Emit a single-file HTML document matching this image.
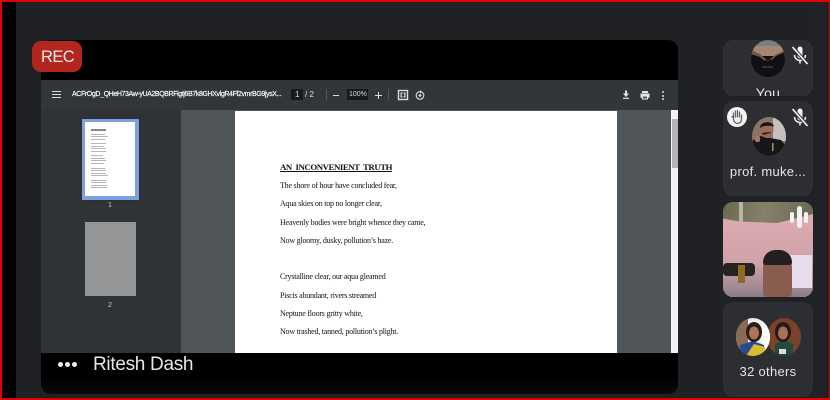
<!DOCTYPE html>
<html>
<head>
<meta charset="utf-8">
<style>
html,body{margin:0;padding:0;background:#202124}
#r{position:relative;width:830px;height:400px;overflow:hidden;background:#202124;font-family:"Liberation Sans",sans-serif;filter:blur(.35px)}
#r div,#r svg{position:absolute}
.t{white-space:nowrap}
.p{left:280px;font:8px/11px "Liberation Serif",serif;letter-spacing:-.22px;color:#111;white-space:nowrap}
.card{left:723px;width:90px;background:#2d2e31;border-radius:10px}
.l{background:#b5b5b5;height:1px}
</style>
</head>
<body>
<div id="r">
<div style="left:0;top:0;width:16px;height:400px;background:#000"></div>
<div style="left:16px;top:0;width:814px;height:400px;background:#202124"></div>
<div style="left:815px;top:0;width:13px;height:400px;background:#212225"></div>

<!-- stage -->
<div style="left:41px;top:40px;width:637px;height:354px;background:#000;border-radius:10px"></div>
<div style="left:41px;top:80px;width:637px;height:30px;background:#323639"></div>
<div style="left:41px;top:110px;width:140px;height:243px;background:#2f3335"></div>
<div style="left:181px;top:110px;width:490px;height:243px;background:#50555a"></div>
<div style="left:235px;top:111px;width:382px;height:242px;background:#fff"></div>
<div style="left:671px;top:110px;width:7px;height:243px;background:#f1f1f1"></div>
<div style="left:672px;top:119px;width:6px;height:49px;background:#b4b4b4"></div>
<div style="left:41px;top:353px;width:637px;height:41px;background:linear-gradient(#000 60%,#0a0a0a);border-radius:0 0 10px 10px"></div>

<!-- REC -->
<div style="left:32px;top:41px;width:50px;height:31px;background:#b3261e;border-radius:9px"></div>
<div class="t" style="left:41px;top:47px;font-size:16.500px;line-height:20px;letter-spacing:-.6px;color:#f5e8e6">REC</div>

<!-- toolbar -->
<div style="left:52px;top:91px;width:9px;height:1.4px;background:#ddd"></div>
<div style="left:52px;top:94px;width:9px;height:1.4px;background:#ddd"></div>
<div style="left:52px;top:97px;width:9px;height:1.4px;background:#ddd"></div>
<div class="t" style="left:72px;top:89px;font-size:7px;line-height:12px;color:#fff;letter-spacing:-.38px;-webkit-text-stroke:.15px #fff">ACFrOgD_QHeH73Aw-yUA2BQBRFigtj6B7k8GHXvlgR4Ff2vmrBG9jysX...</div>
<div style="left:291px;top:89px;width:12px;height:11px;background:#17191b"></div>
<div class="t" style="left:295px;top:89px;font-size:8px;line-height:11px;color:#ddd">1</div>
<div class="t" style="left:305px;top:89px;font-size:8px;line-height:11px;color:#ddd">/ 2</div>
<div style="left:326px;top:89px;width:1px;height:11px;background:#55585b"></div>
<div style="left:333px;top:95px;width:6px;height:1.3px;background:#ddd"></div>
<div style="left:347px;top:89px;width:21px;height:11px;background:#17191b"></div>
<div class="t" style="left:349px;top:89px;font-size:7px;line-height:11px;color:#ddd">100%</div>
<div style="left:375px;top:95px;width:7px;height:1.3px;background:#ddd"></div>
<div style="left:378px;top:92px;width:1.3px;height:7px;background:#ddd"></div>
<div style="left:388px;top:89px;width:1px;height:11px;background:#55585b"></div>
<svg style="left:397px;top:89px" width="12" height="12" viewBox="0 0 12 12"><rect x="1.500" y="1.500" width="9" height="9" fill="none" stroke="#ddd" stroke-width="1.400"/><path d="M3.500 3.500h2v1.300h-.8v2.400h.8v1.300h-2zM8.500 3.500h-2v1.300h.8v2.400h-.8v1.300h2z" fill="#ddd"/></svg>
<svg style="left:414px;top:89px" width="12" height="12" viewBox="0 0 12 12"><circle cx="6" cy="6.500" r="3.800" fill="none" stroke="#ddd" stroke-width="1.100"/><path d="M6 1l2.200 1.700L6 4.400z" fill="#ddd"/><rect x="4.800" y="5.300" width="2.400" height="2.400" transform="rotate(45 6 6.500)" fill="#ddd"/></svg>
<svg style="left:621px;top:89px" width="10" height="12" viewBox="0 0 10 12"><path d="M4 1.500h2v3h2L5 8 2 4.500h2z" fill="#e4e4e4"/><rect x="2" y="8.700" width="6" height="1.200" fill="#e4e4e4"/></svg>
<svg style="left:639px;top:89px" width="12" height="12" viewBox="0 0 12 12"><path d="M3 2h6v2H3zM1.500 4.500h9v4.200H9V10.500H3V8.700H1.500z" fill="#e4e4e4"/><rect x="4" y="7.500" width="4" height="2" fill="#555"/></svg>
<div style="left:662px;top:91px;width:2px;height:2px;background:#ddd;border-radius:50%"></div>
<div style="left:662px;top:94.500px;width:2px;height:2px;background:#ddd;border-radius:50%"></div>
<div style="left:662px;top:98px;width:2px;height:2px;background:#ddd;border-radius:50%"></div>

<!-- thumbnails -->
<div style="left:82px;top:119px;width:57px;height:81px;background:#7e9fe0;box-shadow:0 0 1px #222"></div>
<div style="left:85px;top:122px;width:50px;height:74px;background:#fff"></div>
<div class="l" style="left:91px;top:129px;width:15px;height:2px;background:#888"></div>
<div class="l" style="left:91px;top:134px;width:14px"></div>
<div class="l" style="left:91px;top:136px;width:17px"></div>
<div class="l" style="left:91px;top:139px;width:14px"></div>
<div class="l" style="left:91px;top:143px;width:15px"></div>
<div class="l" style="left:91px;top:146px;width:13px"></div>
<div class="l" style="left:91px;top:148px;width:15px"></div>
<div class="l" style="left:91px;top:151px;width:15px"></div>
<div class="l" style="left:91px;top:155px;width:12px"></div>
<div class="l" style="left:91px;top:158px;width:14px"></div>
<div class="l" style="left:91px;top:160px;width:15px"></div>
<div class="l" style="left:91px;top:163px;width:13px"></div>
<div class="l" style="left:91px;top:168px;width:14px"></div>
<div class="l" style="left:91px;top:170px;width:15px"></div>
<div class="l" style="left:91px;top:173px;width:15px"></div>
<div class="l" style="left:91px;top:175px;width:17px"></div>
<div class="l" style="left:91px;top:180px;width:15px"></div>
<div class="l" style="left:91px;top:182px;width:15px"></div>
<div class="l" style="left:91px;top:185px;width:16px"></div>
<div class="l" style="left:91px;top:187px;width:16px"></div>
<div class="t" style="left:108px;top:201px;font-size:7px;line-height:9px;color:#ccc">1</div>
<div style="left:85px;top:222px;width:51px;height:74px;background:#949697"></div>
<div class="t" style="left:108px;top:301px;font-size:7px;line-height:9px;color:#ccc">2</div>

<!-- document text -->
<div class="p" style="top:162px;font-size:8.800px;font-weight:bold;text-decoration:underline;letter-spacing:-.45px;word-spacing:2px;color:#111">AN INCONVENIENT TRUTH</div>
<div class="p" style="top:180px">The shore of hour have concluded fear,</div>
<div class="p" style="top:198px">Aqua skies on top no longer clear,</div>
<div class="p" style="top:217px">Heavenly bodies were bright whence they came,</div>
<div class="p" style="top:235px">Now gloomy, dusky, pollution’s haze.</div>
<div class="p" style="top:271px">Crystalline clear, our aqua gleamed</div>
<div class="p" style="top:290px">Piscis abundant, rivers streamed</div>
<div class="p" style="top:308px">Neptune floors gritty white,</div>
<div class="p" style="top:326px">Now trashed, tanned, pollution’s plight.</div>

<!-- presenter bar -->
<div style="left:58px;top:362px;width:5px;height:5px;border-radius:50%;background:#eee"></div>
<div style="left:65px;top:362px;width:5px;height:5px;border-radius:50%;background:#eee"></div>
<div style="left:72px;top:362px;width:5px;height:5px;border-radius:50%;background:#eee"></div>
<div class="t" style="left:93px;top:352px;font-size:19px;line-height:26px;letter-spacing:-.3px;color:#e8e8e8">Ritesh Dash</div>

<!-- right column -->
<div class="card" style="top:40px;height:56px"></div>
<svg style="left:751px;top:40px" width="34" height="37" viewBox="0 0 34 37"><defs><clipPath id="a"><ellipse cx="17" cy="18.500" rx="17" ry="18.500"/></clipPath></defs><g clip-path="url(#a)"><rect width="34" height="37" fill="#111114"/><rect width="34" height="9" fill="#7b7f7c"/><rect y="6" width="34" height="10" fill="#a98670"/><path d="M0 10l9 4 8 7 7-6 10-5v8l-34 4z" fill="#6c5a50"/><path d="M0 14l9 3 8 7 8-8 9-4v25H0z" fill="#101013"/><rect x="11" y="26" width="11" height="2" fill="#333"/></g></svg>
<svg style="left:790px;top:45px" width="20" height="22" viewBox="0 0 20 22"><path d="M7.500 4a2.500 2.500 0 0 1 5 0v7a2.500 2.500 0 0 1-5 0z" fill="#f2f2f2"/><path d="M4.500 10a5.500 5.500 0 0 0 11 0M10 15.500v3" fill="none" stroke="#f2f2f2" stroke-width="1.500"/><path d="M2.500 2l15 17" stroke="#2d2e31" stroke-width="3.500"/><path d="M2.500 2l15 17" stroke="#f2f2f2" stroke-width="1.700"/></svg>
<div class="t" style="left:723px;top:84px;width:90px;height:12px;overflow:hidden;text-align:center;font-size:14px;line-height:18px;color:#e6e6e6;letter-spacing:.3px">You</div>

<div class="card" style="top:101px;height:95px"></div>
<div style="left:727px;top:107px;width:20px;height:20px;border-radius:50%;background:#f4f4f4"></div>
<svg style="left:729px;top:108px" width="16" height="18" viewBox="0 0 16 18"><path d="M4.500 10V5M6.500 9V3M8.500 9V2.500M10.500 9V4M4.500 10l-1.500-1.500M4.500 10c0 4 2 5.500 4 5.500s4-1.500 4-4.500V7" fill="none" stroke="#666" stroke-width="1.300" stroke-linecap="round"/></svg>
<svg style="left:752px;top:117px" width="34" height="39" viewBox="0 0 34 39"><defs><clipPath id="b"><ellipse cx="17" cy="19.500" rx="17" ry="19.500"/></clipPath></defs><g clip-path="url(#b)"><rect width="34" height="39" fill="#8a7468"/><rect x="21" width="13" height="24" fill="#c6c2bb"/><path d="M0 39V24l8-5 10 2 11 2 5 6v10z" fill="#17171a"/><ellipse cx="15" cy="13" rx="6.500" ry="8" fill="#9c6d58"/><path d="M8 11c0-7 13-8 14-1-3-2-10-2-14 1z" fill="#16130f"/><path d="M10 16l8-1 1 1-8 2z" fill="#2a1e18"/><rect x="3" y="19" width="5" height="6" rx="2" fill="#a87860"/><rect x="20" y="26" width="1.500" height="8" fill="#a8946a"/></g></svg>
<svg style="left:790px;top:107px" width="20" height="22" viewBox="0 0 20 22"><path d="M7.500 4a2.500 2.500 0 0 1 5 0v7a2.500 2.500 0 0 1-5 0z" fill="#f2f2f2"/><path d="M4.500 10a5.500 5.500 0 0 0 11 0M10 15.500v3" fill="none" stroke="#f2f2f2" stroke-width="1.500"/><path d="M2.500 2l15 17" stroke="#2d2e31" stroke-width="3.500"/><path d="M2.500 2l15 17" stroke="#f2f2f2" stroke-width="1.700"/></svg>
<div class="t" style="left:723px;top:163px;width:90px;text-align:center;font-size:13px;line-height:18px;color:#e6e6e6;letter-spacing:.3px">prof. muke...</div>

<!-- video tile -->
<div style="left:723px;top:202px;width:90px;height:95px;border-radius:10px;overflow:hidden;background:#d6a9ae">
  <div style="left:0;top:20px;width:90px;height:75px;background:linear-gradient(#dcaab0,#cfa2a9 55%,#a48d96 85%,#8a7a84)"></div>
  <div style="left:0;top:0;width:90px;height:30px;background:linear-gradient(100deg,#6a6a50,#84806a 45%,#6a6852);clip-path:polygon(0 0,100% 0,100% 40%,60% 70%,18% 65%,0 55%)"></div>
  <div style="left:16px;top:0;width:4px;height:20px;background:#b8b4a4"></div>
  <div style="left:0;top:61px;width:32px;height:13px;background:#262420;border-radius:4px"></div>
  <div style="left:15px;top:63px;width:7px;height:18px;background:#8c6a1e"></div>
  <div style="left:67px;top:53px;width:22px;height:33px;background:#e6dcea"></div>
  <div style="left:40px;top:52px;width:29px;height:43px;background:#8a5c4e;border-radius:13px 13px 4px 4px"></div>
  <div style="left:40px;top:48px;width:29px;height:15px;background:#241f1f;border-radius:14px 14px 3px 3px"></div>
</div>
<div style="left:790px;top:212px;width:4px;height:11px;border-radius:2px;background:#f4f4f4"></div>
<div style="left:797px;top:206px;width:5px;height:22px;border-radius:3px;background:#f4f4f4"></div>
<div style="left:804px;top:212px;width:4px;height:11px;border-radius:2px;background:#f4f4f4"></div>

<!-- others -->
<div class="card" style="top:302px;height:95px"></div>
<svg style="left:767px;top:318px" width="34" height="38" viewBox="0 0 34 38"><defs><clipPath id="c"><ellipse cx="17" cy="19" rx="17" ry="19"/></clipPath></defs><g clip-path="url(#c)"><rect width="34" height="38" fill="#7a4228"/><path d="M8 38V26l9-4 9 4v12z" fill="#1f4a3c"/><ellipse cx="16" cy="14" rx="8" ry="10" fill="#251a18"/><ellipse cx="16" cy="15" rx="5" ry="6.500" fill="#a87058"/><rect x="12" y="31" width="7" height="5" fill="#ddd"/></g></svg>
<svg style="left:736px;top:318px" width="34" height="38" viewBox="0 0 34 38"><defs><clipPath id="d"><ellipse cx="17" cy="19" rx="17" ry="19"/></clipPath></defs><g clip-path="url(#d)"><rect width="34" height="38" fill="#eee"/><rect width="12" height="38" fill="#8a6a52"/><rect x="26" width="8" height="38" fill="#fafafa"/><path d="M4 38V27l13-4 11 4v11z" fill="#2a4a90"/><path d="M10 38l8-12 11 3v9z" fill="#dcbc2c"/><ellipse cx="18" cy="14" rx="8" ry="10" fill="#2a1c1a"/><ellipse cx="18" cy="15" rx="5" ry="6.500" fill="#ae7258"/></g></svg>
<div class="t" style="left:723px;top:363px;width:90px;text-align:center;font-size:13px;line-height:18px;color:#e6e6e6;letter-spacing:.3px">32 others</div>

<!-- red frame -->
<div style="left:0;top:0;width:830px;height:2px;background:#e30000"></div>
<div style="left:0;top:398px;width:830px;height:2px;background:#e30000"></div>
<div style="left:0;top:0;width:1.500px;height:400px;background:#e30000"></div>
<div style="left:829px;top:0;width:1px;height:400px;background:#e30000"></div>
</div>
</body>
</html>
